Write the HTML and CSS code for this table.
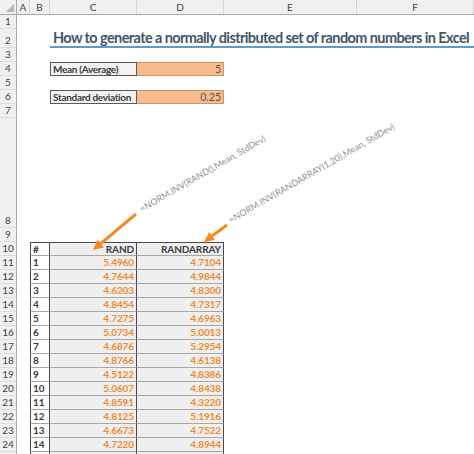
FILE: index.html
```html
<!DOCTYPE html>
<html>
<head>
<meta charset="utf-8">
<link rel="stylesheet" href="styles.css">
</head>
<body>
<div class="sheet">
  <div class="row colhead">
    <div class="corner"><span class="tri"></span></div>
    <div class="ch">A</div>
    <div class="ch">B</div>
    <div class="ch">C</div>
    <div class="ch">D</div>
    <div class="ch">E</div>
    <div class="ch">F</div>
  </div>
  <div class="row"><div class="rh">1</div></div>
  <div class="row r2"><div class="rh">2</div><div class="title">How to generate a normally distributed set of random numbers in Excel</div></div>
  <div class="row"><div class="rh">3</div></div>
  <div class="row"><div class="rh">4</div><div class="lbl">Mean (Average)</div><div class="inp">5</div></div>
  <div class="row"><div class="rh">5</div></div>
  <div class="row"><div class="rh">6</div><div class="lbl">Standard deviation</div><div class="inp">0.25</div></div>
  <div class="row"><div class="rh">7</div></div>
  <div class="row r8"><div class="rh">8</div></div>
  <div class="row"><div class="rh">9</div></div>
  <div class="row thead"><div class="rh">10</div><div class="tn">#</div><div class="tc">RAND</div><div class="tc">RANDARRAY</div></div>
  <div class="row"><div class="rh">11</div><div class="tn">1</div><div class="tc v">5.4960</div><div class="tc v">4.7104</div></div>
  <div class="row"><div class="rh">12</div><div class="tn">2</div><div class="tc v">4.7644</div><div class="tc v">4.9844</div></div>
  <div class="row"><div class="rh">13</div><div class="tn">3</div><div class="tc v">4.6203</div><div class="tc v">4.8300</div></div>
  <div class="row"><div class="rh">14</div><div class="tn">4</div><div class="tc v">4.8454</div><div class="tc v">4.7317</div></div>
  <div class="row"><div class="rh">15</div><div class="tn">5</div><div class="tc v">4.7275</div><div class="tc v">4.6963</div></div>
  <div class="row"><div class="rh">16</div><div class="tn">6</div><div class="tc v">5.0734</div><div class="tc v">5.0013</div></div>
  <div class="row"><div class="rh">17</div><div class="tn">7</div><div class="tc v">4.6876</div><div class="tc v">5.2954</div></div>
  <div class="row"><div class="rh">18</div><div class="tn">8</div><div class="tc v">4.8766</div><div class="tc v">4.6138</div></div>
  <div class="row"><div class="rh">19</div><div class="tn">9</div><div class="tc v">4.5122</div><div class="tc v">4.8386</div></div>
  <div class="row"><div class="rh">20</div><div class="tn">10</div><div class="tc v">5.0607</div><div class="tc v">4.8438</div></div>
  <div class="row"><div class="rh">21</div><div class="tn">11</div><div class="tc v">4.8591</div><div class="tc v">4.3220</div></div>
  <div class="row"><div class="rh">22</div><div class="tn">12</div><div class="tc v">4.8125</div><div class="tc v">5.1916</div></div>
  <div class="row"><div class="rh">23</div><div class="tn">13</div><div class="tc v">4.6673</div><div class="tc v">4.7522</div></div>
  <div class="row"><div class="rh">24</div><div class="tn">14</div><div class="tc v">4.7220</div><div class="tc v">4.8944</div></div>
  <div class="row"><div class="rh"></div><div class="tn"></div><div class="tc"></div><div class="tc"></div></div>
</div>

<svg class="arrows" width="474" height="454" viewBox="0 0 474 454">
  <line x1="136" y1="214" x2="100.7" y2="243.6" stroke="#f5881f" stroke-width="3"/>
  <polygon points="93,250 103.9,247.4 97.4,239.7" fill="#f5881f"/>
  <line x1="227" y1="225" x2="212" y2="236" stroke="#f5881f" stroke-width="3"/>
  <polygon points="204,242 215,240.1 209.1,232" fill="#f5881f"/>
</svg>
<div class="note note1">=NORM.INV(RAND(),Mean, StdDev)</div>
<div class="note note2">=NORM.INV(RANDARRAY(1,20),Mean, StdDev)</div>
</body>
</html>
```
FILE: styles.css
```css
* { box-sizing: border-box; }
html, body { margin: 0; padding: 0; background: #fff; }
body {
  width: 474px;
  height: 454px;
  overflow: hidden;
  position: relative;
  font-family: Lato, "Liberation Sans", sans-serif;
  color: #333;
}
.sheet { display: flex; flex-direction: column; }
.row {
  display: grid;
  grid-template-columns: 17px 13px 20px 87px 87px 133px 117px;
  height: 14px;
}
.colhead { height: 15px; background: #f0f0f0; border-bottom: 1px solid #a9a9a9; }
.corner { position: relative; border-right: 1px solid #a9a9a9; }
.tri {
  position: absolute; right: 2px; bottom: 2px;
  width: 0; height: 0;
  border-left: 8px solid transparent;
  border-bottom: 8px solid #b8b8b8;
}
.ch {
  font-size: 10px; color: #444;
  display: flex; align-items: center; justify-content: center;
  border-right: 1px solid #d6d6d6;
}
.rh {
  grid-column: 1;
  background: #f0f0f0;
  border-right: 1px solid #a9a9a9;
  border-bottom: 1px solid #dcdcdc;
  font-size: 10px; color: #444;
  display: flex; align-items: flex-end; justify-content: center;
  padding-bottom: 1px;
  line-height: 12px;
}
.r2 { height: 19px; }
.r8 { height: 110px; }
.title {
  grid-column: 4 / 8;
  border-bottom: 2px solid #5b9bd5;
  font-weight: 700;
  font-size: 14.5px;
  letter-spacing: -0.6px;
  color: #44546a;
  padding-left: 3px;
  line-height: 17px;
  white-space: nowrap;
}
.lbl {
  grid-column: 4;
  background: #f2f2f2;
  border: 1px solid #5a5a5a;
  font-weight: 700; font-size: 10px; color: #3a3a3a;
  letter-spacing: -0.3px;
  padding-left: 2px; line-height: 12px;
  white-space: nowrap;
}
.inp {
  grid-column: 5;
  background: #f7bb8c;
  border: 1px solid #c9956c;
  border-left: none;
  font-size: 10.5px; color: #555;
  text-align: right; padding-right: 2px; line-height: 12px;
}
.tn, .tc {
  border-right: 1px solid #4a4a4a;
  border-bottom: 1px solid #a6a6a6;
  font-weight: 700; font-size: 10px;
  line-height: 13px;
  white-space: nowrap;
}
.tn {
  grid-column: 3;
  border-left: 1px solid #4a4a4a;
  background: #fff; color: #3a3a3a;
  padding-left: 2px;
}
.tc { background: #efefef; color: #3a3a3a; text-align: right; padding-right: 2px; letter-spacing: -0.1px; }
.thead .tn, .thead .tc { border-top: 1px solid #4a4a4a; line-height: 12px; }
.v { color: #f28a2e; }
.arrows { position: absolute; left: 0; top: 0; pointer-events: none; }
.note {
  position: absolute;
  font-size: 9px; line-height: 11px;
  color: #8f8f8f;
  white-space: nowrap;
  transform-origin: 0 100%;
  transform: rotate(-30deg);
}
.note1 { left: 143px; top: 203px; }
.note2 { left: 232px; top: 214px; }
```
